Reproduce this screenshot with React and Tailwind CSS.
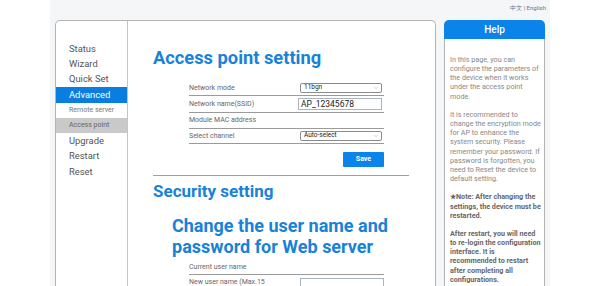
import { ChevronDown } from 'lucide-react';

const menu = [
    { label: 'Status' },
    { label: 'Wizard' },
    { label: 'Quick Set' },
    { label: 'Advanced', active: true },
    { label: 'Remote server', sub: true },
    { label: 'Access point', sub: true, current: true },
    { label: 'Upgrade' },
    { label: 'Restart' },
    { label: 'Reset' },
];

const FakeSelect = ({ value }) => (
    <div className="flex items-center justify-between h-[10px] w-[82px] border border-[#8a8a8a] rounded-[2px] bg-white pl-[3px] pr-[2px] text-[6.5px] text-[#222]">
        <span>{value}</span>
        <ChevronDown className="w-[6px] h-[6px] text-[#888]" strokeWidth={1.5} />
    </div>
);

const Row = ({ label, children, h = 'h-[15px]' }) => (
    <div className={`flex items-center ${h} border-b border-[#9a9a9a]`}>
        <div className="w-[111px] text-[7px] text-[#666]">{label}</div>
        <div>{children}</div>
    </div>
);

export default function App() {
    return (
        <div className="w-[600px] h-[286px] overflow-hidden bg-white font-['Roboto',sans-serif]">
            <div className="mx-[50px] h-full bg-[#f5f6f8]">
                {/* language links */}
                <div className="h-[20px] flex justify-end items-start pt-[3px] pr-[4px] text-[6px] text-[#5c7894]">
                    中文 | English
                </div>

                <div className="flex">
                    {/* main panel */}
                    <div className="ml-[5px] w-[381px] h-[266px] flex bg-white border border-b-0 border-[#b4b4b4] rounded-t-[5px] overflow-hidden">
                        <div className="w-[72px] shrink-0 border-r border-[#c4c4c4] pt-[20px]">
                            {menu.map(item => (
                                <div
                                    key={item.label}
                                    className={`h-[15.4px] flex items-center pl-[13px] ${item.sub ? 'text-[7px]' : 'text-[9.4px]'} ${item.active ? 'bg-[#0a7ee0] text-white' : item.current ? 'bg-[#c9c9c9] text-[#666]' : item.sub ? 'text-[#777]' : 'text-[#555]'}`}
                                >
                                    {item.label}
                                </div>
                            ))}
                        </div>

                        <div className="flex-1 pl-[25px] pt-[26px]">
                            <h1 className="text-[18.3px] leading-[22px] font-bold text-[#1782d8]">Access point setting</h1>

                            <div className="ml-[36px] mt-[12px] w-[195px]">
                                <Row label="Network mode">
                                    <FakeSelect value="11bgn" />
                                </Row>
                                <Row label="Network name(SSID)" h="h-[17px]">
                                    <div className="h-[12px] w-[84px] -ml-[2px] border border-[#a9b4c0] flex items-center pl-[2px] text-[8.5px] text-[#222]">AP_12345678</div>
                                </Row>
                                <Row label="Module MAC address" h="h-[16px]" />
                                <Row label="Select channel">
                                    <FakeSelect value="Auto-select" />
                                </Row>
                                <div className="flex justify-end mt-[8px]">
                                    <button className="w-[41px] h-[15px] bg-[#0a84e8] text-white text-[7px] font-bold rounded-[1px]">Save</button>
                                </div>
                            </div>

                            <div className="mt-[8px] w-[256px] border-t border-[#a0a0a0]" />

                            <h2 className="mt-[5px] text-[17px] leading-[20px] font-bold text-[#1782d8]">Security setting</h2>

                            <h3 className="ml-[19px] mt-[15px] text-[18px] leading-[20.5px] font-bold text-[#1782d8]">
                                Change the user name and<br />password for Web server
                            </h3>

                            <div className="ml-[36px] mt-[4px] w-[195px]">
                                <Row label="Current user name" h="h-[14px]" />
                                <div className="flex items-start pt-[3px]">
                                    <div className="w-[111px] text-[7px] leading-[9px] text-[#666]">New user name (Max.15<br />characters)</div>
                                    <div className="h-[14px] w-[84px] border border-[#a9b4c0]" />
                                </div>
                            </div>
                        </div>
                    </div>

                    {/* help panel */}
                    <div className="ml-[8px] w-[101px] h-[266px] flex flex-col">
                        <div className="h-[19px] bg-[#0a84e8] rounded-t-[5px] flex items-center justify-center text-white text-[10px] font-medium">Help</div>
                        <div className="flex-1 bg-white border-x border-[#b4b4b4] pl-[5px] pr-[3px] pt-[16px] text-[7.2px] leading-[9.15px] text-[#888]">
                            In this page, you can configure the parameters of the device when it works under the access point mode.
                            <br /><br />
                            It is recommended to change the encryption mode for AP to enhance the system security. Please remember your password. If password is forgotten, you need to Reset the device to default setting.
                            <br /><br />
                            <span className="font-bold text-[#666]">★Note: After changing the settings, the device must be restarted.</span>
                            <br /><br />
                            <span className="font-bold text-[#666]">After restart, you will need to re-login the configuration interface. It is recommended to restart after completing all configurations.</span>
                        </div>
                    </div>
                </div>
            </div>
        </div>
    );
}
